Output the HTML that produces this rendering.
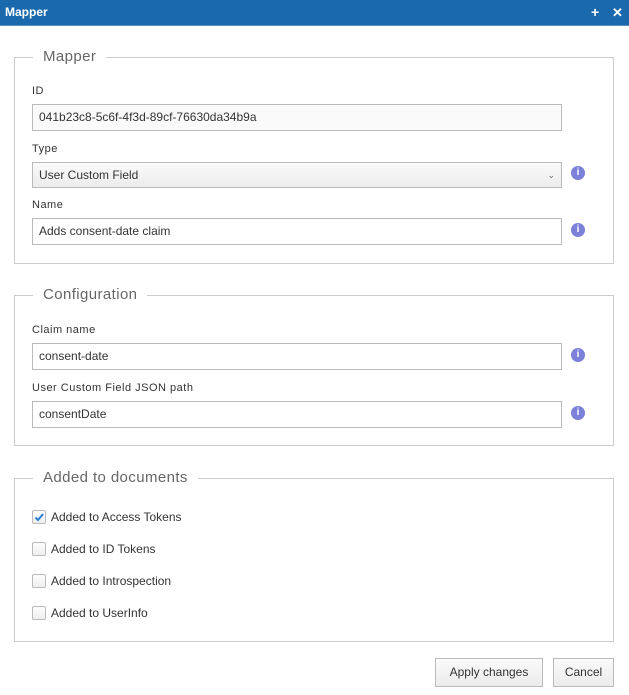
<!DOCTYPE html>
<html><head><style>
*{box-sizing:border-box;margin:0;padding:0}
body{width:629px;height:695px;background:#fff;font-family:"Liberation Sans",sans-serif;font-size:12px;color:#333;position:relative;overflow:hidden}
.hdr{position:absolute;left:0;top:0;width:629px;height:26px;background:#1a69ad;color:#fff;font-weight:bold;font-size:12px;line-height:25px;padding-left:5px;border-bottom:1px solid #5a8fc4}
.hdr .ic{position:absolute;top:0;font-size:14px}
.fs{position:absolute;left:14px;width:600px;border:1px solid #ccc}
.lg{position:absolute;background:#fff;color:#666;font-size:15px;padding:0 10px;left:18px;top:-11px;line-height:20px;letter-spacing:0.4px}
.lbl{position:absolute;left:32px;font-size:11px;color:#333;letter-spacing:0.5px}
.in{position:absolute;left:32px;width:530px;height:27px;border:1px solid #bbb;padding-left:6px;line-height:25px;font-size:12px;background:#fff}
.sel{background:linear-gradient(#fafafa,#ececec)}
.info{position:absolute;left:571px;width:14px;height:14px;border-radius:50%;background:#7b80d8;color:#fff;font-size:10px;font-weight:bold;text-align:center;line-height:14px}
.cb{position:absolute;left:32px;width:14px;height:14px;border:1px solid #bbb;border-radius:2px;background:linear-gradient(#fff,#eee)}
.ct{position:absolute;left:51px;font-size:12px}
.btn{position:absolute;top:658px;height:29px;border:1px solid #bbb;background:linear-gradient(#fafafa,#ececec);text-align:center;line-height:27px;font-size:12px;color:#333}
</style></head><body>
<div class="hdr">Mapper<span class="ic" style="left:591px">+</span><span class="ic" style="left:612px;font-size:13px">✕</span></div>

<div class="fs" style="top:57px;height:207px"><div class="lg">Mapper</div></div>
<div class="lbl" style="top:85px">ID</div>
<div class="in" style="top:104px;background:#fafafa">041b23c8-5c6f-4f3d-89cf-76630da34b9a</div>
<div class="lbl" style="top:143px">Type</div>
<div class="in sel" style="top:162px;height:26px;line-height:24px">User Custom Field<span style="position:absolute;right:6px;font-size:9px;color:#666">&#8964;</span></div>
<div class="info" style="top:166px">i</div>
<div class="lbl" style="top:199px">Name</div>
<div class="in" style="top:218px">Adds consent-date claim</div>
<div class="info" style="top:223px">i</div>

<div class="fs" style="top:295px;height:151px"><div class="lg">Configuration</div></div>
<div class="lbl" style="top:324px">Claim name</div>
<div class="in" style="top:343px">consent-date</div>
<div class="info" style="top:348px">i</div>
<div class="lbl" style="top:382px">User Custom Field JSON path</div>
<div class="in" style="top:401px">consentDate</div>
<div class="info" style="top:406px">i</div>

<div class="fs" style="top:478px;height:164px"><div class="lg">Added to documents</div></div>
<div class="cb" style="top:510px"><svg width="12" height="12" style="position:absolute;left:0;top:0"><path d="M2.5 6.5 L5 9 L10 3" stroke="#2a7fd4" stroke-width="2" fill="none"/></svg></div>
<div class="ct" style="top:510px">Added to Access Tokens</div>
<div class="cb" style="top:542px"></div><div class="ct" style="top:542px">Added to ID Tokens</div>
<div class="cb" style="top:574px"></div><div class="ct" style="top:574px">Added to Introspection</div>
<div class="cb" style="top:606px"></div><div class="ct" style="top:606px">Added to UserInfo</div>

<div class="btn" style="left:435px;width:108px">Apply changes</div>
<div class="btn" style="left:553px;width:61px">Cancel</div>
</body></html>
